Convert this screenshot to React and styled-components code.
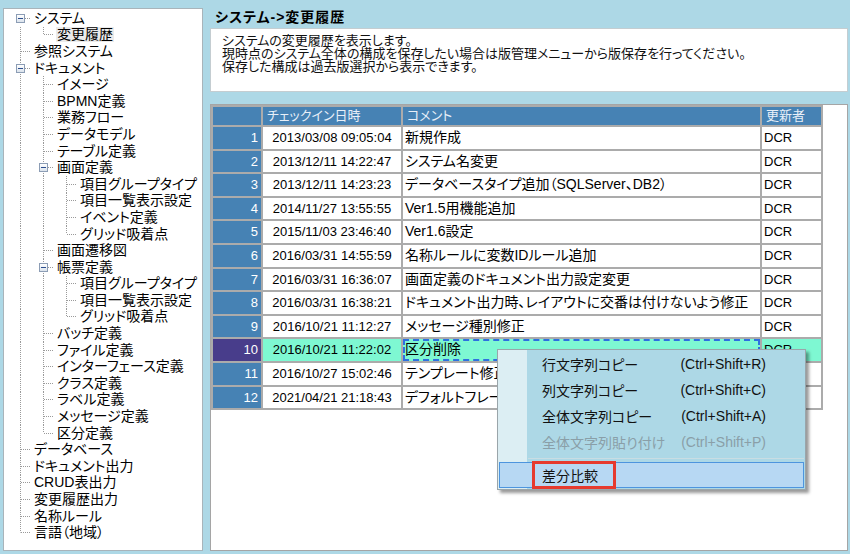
import React from "react";
import styled, { createGlobalStyle } from "styled-components";

const GlobalStyle = createGlobalStyle`
  html, body {
    margin: 0;
    padding: 0;
  }
  body {
    background: #add8e6;
    font-family: "Liberation Sans", "Noto Sans CJK JP", sans-serif;
    font-feature-settings: "palt";
    color: #000;
  }
`;

const Screen = styled.div`
  width: 850px;
  height: 554px;
  box-sizing: border-box;
  display: flex;
  gap: 7px;
  padding: 8px 2px 3px 3px;
`;

/* ---- tree ---- */

const TreePanel = styled.div`
  width: 200px;
  flex-shrink: 0;
  box-sizing: border-box;
  background: #fff;
  border: 1px solid #a9b4ba;
  padding: 1px 0 0 5px;
  font-size: 14px;
`;

const TreeRow = styled.div`
  display: flex;
  height: 16.6px;
`;

const dotsV = "repeating-linear-gradient(to bottom, #9a9a9a 0 1px, transparent 1px 2px)";
const dotsH = "repeating-linear-gradient(to right, #9a9a9a 0 1px, transparent 1px 2px)";

const Guide = styled.div`
  width: 23px;
  flex-shrink: 0;
  background: ${(p) => (p.$line ? `${dotsV} no-repeat 11px 0 / 1px 100%` : "none")};
`;

const Connector = styled.div`
  width: 23px;
  flex-shrink: 0;
  display: flex;
  align-items: center;
  background: ${(p) => {
    const top = p.$top ? "0" : "50%";
    const size = p.$top && p.$bottom ? "100%" : "50%";
    return `${dotsH} no-repeat 12px 50% / 10px 1px, ${dotsV} no-repeat 11px ${top} / 1px ${size}`;
  }};
`;

const Expander = styled.div`
  width: 9px;
  height: 9px;
  margin-left: 7px;
  box-sizing: border-box;
  border: 1px solid #8c9db5;
  background: linear-gradient(#ffffff, #dbe3ec);
  display: flex;
  align-items: center;
  justify-content: center;

  &::before {
    content: "";
    width: 5px;
    height: 1px;
    background: #2d4f8e;
  }
`;

const TreeLabel = styled.span`
  align-self: center;
  margin-left: 1px;
  padding: 0 1px;
  line-height: 15px;
  white-space: nowrap;
  background: ${(p) => (p.$selected ? "#ebebeb" : "transparent")};
`;

/* ---- right side ---- */

const Main = styled.div`
  flex: 1;
  display: flex;
  flex-direction: column;
  min-width: 0;
`;

const Title = styled.div`
  height: 20px;
  padding-left: 5px;
  font-size: 14px;
  font-weight: bold;
  letter-spacing: 1px;
  line-height: 18px;
`;

const Description = styled.div`
  height: 64px;
  box-sizing: border-box;
  background: #fff;
  border: 1px solid #c4cdd1;
  padding: 5px 0 0 11px;
  font-size: 13px;
  color: #111;
`;

const DescLine = styled.div`
  height: 13px;
  line-height: 13px;
  white-space: nowrap;
`;

const TableBox = styled.div`
  position: relative;
  flex: 1;
  margin-top: 12px;
  background: #fff;
  border: 1px solid #a5a5a5;
`;

const Grid = styled.div`
  display: grid;
  grid-template-columns: 48px 138px 357px 59px;
  grid-template-rows: 18px;
  grid-auto-rows: 21.6px;
  gap: 2px;
  padding: 2px;
  width: max-content;
  background: #ababab;
`;

const HeadCell = styled.div`
  background: #4682b4;
  color: #e8eff8;
  font-size: 13px;
  line-height: 18px;
  padding-left: 4px;
  white-space: nowrap;
`;

const NumCell = styled.div`
  background: ${(p) => (p.$selected ? "#483d8b" : "#4682b4")};
  color: #fff;
  font-size: 13px;
  line-height: 21.6px;
  text-align: right;
  padding-right: 3px;
`;

const DataCell = styled.div`
  background: ${(p) => (p.$selected ? "#7ef8d2" : "#fff")};
  font-size: ${(p) => (p.$small ? "13px" : "14px")};
  line-height: 21.6px;
  text-align: ${(p) => (p.$center ? "center" : "left")};
  padding-left: ${(p) => (p.$center ? "0" : "2px")};
  white-space: nowrap;
  overflow: hidden;
  box-sizing: border-box;
  outline: ${(p) => (p.$focus ? "2px dashed #2f6fe0" : "none")};
  outline-offset: -2px;
`;

/* ---- context menu ---- */

const Menu = styled.div`
  position: absolute;
  left: 286px;
  top: 244px;
  width: 309px;
  box-sizing: border-box;
  border: 1px solid #9aa5aa;
  padding: 1px;
  background: linear-gradient(to right, #dceef3 0 29px, #add8e6 29px);
  box-shadow: 3px 3px 3px rgba(0, 0, 0, 0.4);
  font-size: 14px;
`;

const MenuItem = styled.div`
  position: relative;
  height: 26px;
  box-sizing: border-box;
  display: flex;
  align-items: center;
  padding: 0 37px 0 42px;
  color: ${(p) => (p.$disabled ? "#8a9fa8" : "#111")};
  border: 1px solid ${(p) => (p.$active ? "#4d95de" : "transparent")};
  background: ${(p) => (p.$active ? "#b7d8f3" : "transparent")};
`;

const Shortcut = styled.span`
  margin-left: auto;
`;

const Separator = styled.div`
  height: 7px;
  margin-left: 29px;
  background: linear-gradient(#c9dde3, #c9dde3) no-repeat 0 3px / 100% 1px;
`;

const Callout = styled.div`
  position: absolute;
  left: 32px;
  top: -2px;
  width: 84px;
  height: 28px;
  box-sizing: border-box;
  border: 3px solid #e63a2e;
`;

const TREE = [
  { label: "システム", children: [{ label: "変更履歴", selected: true }] },
  { label: "参照システム" },
  {
    label: "ドキュメント",
    children: [
      { label: "イメージ" },
      { label: "BPMN定義" },
      { label: "業務フロー" },
      { label: "データモデル" },
      { label: "テーブル定義" },
      {
        label: "画面定義",
        children: [
          { label: "項目グループタイプ" },
          { label: "項目一覧表示設定" },
          { label: "イベント定義" },
          { label: "グリッド吸着点" },
        ],
      },
      { label: "画面遷移図" },
      {
        label: "帳票定義",
        children: [
          { label: "項目グループタイプ" },
          { label: "項目一覧表示設定" },
          { label: "グリッド吸着点" },
        ],
      },
      { label: "バッチ定義" },
      { label: "ファイル定義" },
      { label: "インターフェース定義" },
      { label: "クラス定義" },
      { label: "ラベル定義" },
      { label: "メッセージ定義" },
      { label: "区分定義" },
    ],
  },
  { label: "データベース" },
  { label: "ドキュメント出力" },
  { label: "CRUD表出力" },
  { label: "変更履歴出力" },
  { label: "名称ルール" },
  { label: "言語（地域）" },
];

function flatten(nodes, trail = [], out = []) {
  nodes.forEach((node, i) => {
    const isLast = i === nodes.length - 1;
    out.push({ ...node, trail, isLast, isFirstRoot: trail.length === 0 && i === 0 });
    if (node.children) flatten(node.children, [...trail, isLast], out);
  });
  return out;
}

const DESCRIPTION = [
  "システムの変更履歴を表示します。",
  "現時点のシステム全体の構成を保存したい場合は版管理メニューから版保存を行ってください。",
  "保存した構成は過去版選択から表示できます。",
];

const HISTORY = [
  ["2013/03/08 09:05:04", "新規作成"],
  ["2013/12/11 14:22:47", "システム名変更"],
  ["2013/12/11 14:23:23", "データベースタイプ追加（SQLServer、DB2）"],
  ["2014/11/27 13:55:55", "Ver1.5用機能追加"],
  ["2015/11/03 23:46:40", "Ver1.6設定"],
  ["2016/03/31 14:55:59", "名称ルールに変数IDルール追加"],
  ["2016/03/31 16:36:07", "画面定義のドキュメント出力設定変更"],
  ["2016/03/31 16:38:21", "ドキュメント出力時、レイアウトに交番は付けないよう修正"],
  ["2016/10/21 11:12:27", "メッセージ種別修正"],
  ["2016/10/21 11:22:02", "区分削除"],
  ["2016/10/27 15:02:46", "テンプレート修正"],
  ["2021/04/21 21:18:43", "デフォルトフレーム設定"],
];

const SELECTED = 10;

function Tree() {
  const rows = flatten(TREE);
  return (
    <TreePanel>
      {rows.map((row, i) => (
        <TreeRow key={i}>
          {row.trail.map((last, k) => (
            <Guide key={k} $line={!last} />
          ))}
          <Connector $top={!row.isFirstRoot} $bottom={!row.isLast}>
            {row.children && <Expander />}
          </Connector>
          <TreeLabel $selected={row.selected}>{row.label}</TreeLabel>
        </TreeRow>
      ))}
    </TreePanel>
  );
}

function ContextMenu() {
  return (
    <Menu>
      <MenuItem>
        行文字列コピー<Shortcut>(Ctrl+Shift+R)</Shortcut>
      </MenuItem>
      <MenuItem>
        列文字列コピー<Shortcut>(Ctrl+Shift+C)</Shortcut>
      </MenuItem>
      <MenuItem>
        全体文字列コピー<Shortcut>(Ctrl+Shift+A)</Shortcut>
      </MenuItem>
      <MenuItem $disabled>
        全体文字列貼り付け<Shortcut>(Ctrl+Shift+P)</Shortcut>
      </MenuItem>
      <Separator />
      <MenuItem $active>
        差分比較
        <Callout />
      </MenuItem>
    </Menu>
  );
}

export default function App() {
  return (
    <>
      <GlobalStyle />
      <Screen>
        <Tree />
        <Main>
          <Title>システム-&gt;変更履歴</Title>
          <Description>
            {DESCRIPTION.map((line) => (
              <DescLine key={line}>{line}</DescLine>
            ))}
          </Description>
          <TableBox>
            <Grid>
              <HeadCell />
              <HeadCell>チェックイン日時</HeadCell>
              <HeadCell>コメント</HeadCell>
              <HeadCell>更新者</HeadCell>
              {HISTORY.map(([date, comment], i) => {
                const no = i + 1;
                const sel = no === SELECTED;
                return (
                  <React.Fragment key={no}>
                    <NumCell $selected={sel}>{no}</NumCell>
                    <DataCell $selected={sel} $center $small>
                      {date}
                    </DataCell>
                    <DataCell $selected={sel} $focus={sel}>
                      {comment}
                    </DataCell>
                    <DataCell $selected={sel} $small>
                      DCR
                    </DataCell>
                  </React.Fragment>
                );
              })}
            </Grid>
            <ContextMenu />
          </TableBox>
        </Main>
      </Screen>
    </>
  );
}
